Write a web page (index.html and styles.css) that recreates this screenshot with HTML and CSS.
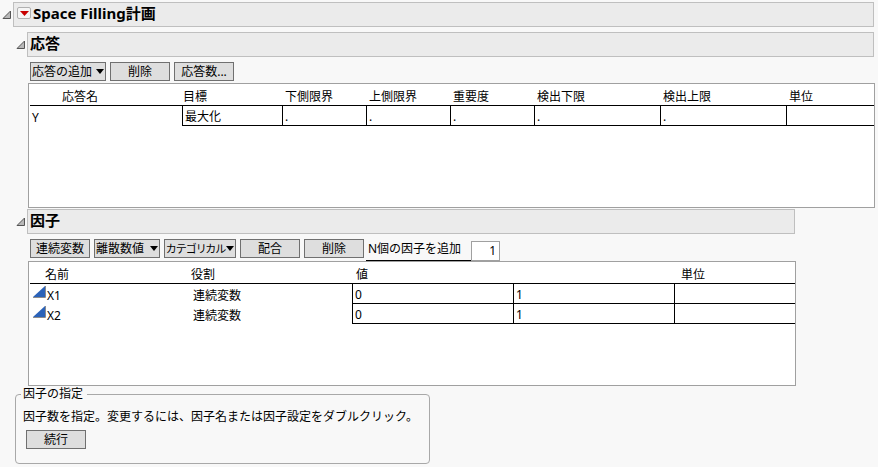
FILE: index.html
```html
<!DOCTYPE html>
<html lang="ja">
  <head>
    <meta charset="UTF-8" />
    <meta name="viewport" content="width=device-width, initial-scale=1" />
    <title>Space Filling計画</title>
    <link rel="stylesheet" href="styles.css">
  </head>
  <body>
    <main class="report">
      <div class="outline">
        <button class="disclosure" aria-label="Space Filling計画を閉じる">
          <svg width="10" height="10" viewBox="0 0 10 10"><path d="M1 8.5H8.5V1Z" fill="#b8b8b8" stroke="#555" /></svg>
        </button>
        <div class="title-bar">
          <button class="red-menu" aria-label="メニュー">
            <svg width="9" height="5" viewBox="0 0 9 5"><path d="M0 0H9L4.5 5Z" fill="#c80000" /></svg>
          </button>
          <h1>Space Filling計画</h1>
        </div>
      </div>

      <section class="section">
        <div class="outline">
          <button class="disclosure" aria-label="応答を閉じる">
            <svg width="10" height="10" viewBox="0 0 10 10"><path d="M1 8.5H8.5V1Z" fill="#b8b8b8" stroke="#555" /></svg>
          </button>
          <div class="title-bar"><h2>応答</h2></div>
        </div>
        <div class="toolbar">
          <button class="btn menu wide">応答の追加<span class="arrow"></span></button>
          <button class="btn">削除</button>
          <button class="btn">応答数...</button>
        </div>
        <div class="list">
          <table class="responses">
            <colgroup>
              <col class="col-name" />
              <col class="col-goal" />
              <col class="col-num" />
              <col class="col-num" />
              <col class="col-num" />
              <col class="col-detect" />
              <col class="col-detect" />
              <col />
            </colgroup>
            <thead>
              <tr>
                <th class="indent">応答名</th>
                <th class="goal-head">目標</th>
                <th>下側限界</th>
                <th>上側限界</th>
                <th>重要度</th>
                <th>検出下限</th>
                <th>検出上限</th>
                <th>単位</th>
              </tr>
            </thead>
            <tbody>
              <tr>
                <td>Y</td>
                <td class="cell">最大化</td>
                <td class="cell">.</td>
                <td class="cell">.</td>
                <td class="cell">.</td>
                <td class="cell">.</td>
                <td class="cell">.</td>
                <td class="cell"></td>
              </tr>
            </tbody>
          </table>
        </div>
      </section>

      <section class="section factors-section">
        <div class="outline">
          <button class="disclosure" aria-label="因子を閉じる">
            <svg width="10" height="10" viewBox="0 0 10 10"><path d="M1 8.5H8.5V1Z" fill="#b8b8b8" stroke="#555" /></svg>
          </button>
          <div class="title-bar"><h2>因子</h2></div>
        </div>
        <div class="toolbar">
          <button class="btn">連続変数</button>
          <button class="btn menu">離散数値<span class="arrow"></span></button>
          <button class="btn menu kana">カテゴリカル<span class="arrow"></span></button>
          <button class="btn">配合</button>
          <button class="btn">削除</button>
          <div class="add-factors">
            <label for="factorCount">N個の因子を追加</label>
            <input type="text" id="factorCount" value="1" />
          </div>
        </div>
        <div class="list">
          <table class="factors">
            <colgroup>
              <col class="col-factor" />
              <col class="col-value" />
              <col class="col-value" />
              <col class="col-value" />
              <col />
            </colgroup>
            <thead>
              <tr>
                <th class="factor-head">名前</th>
                <th>役割</th>
                <th colspan="2" class="value-head">値</th>
                <th class="unit-head">単位</th>
              </tr>
            </thead>
            <tbody>
              <tr>
                <td class="factor">
                  <svg width="13" height="12" viewBox="0 0 13 12"><path d="M0 11L12 0V11Z" fill="#2b62b8" /><path d="M0 11.5H12.5V0" fill="none" stroke="#8c8c8c" /></svg>X1
                </td>
                <td>連続変数</td>
                <td class="cell">0</td>
                <td class="cell">1</td>
                <td class="cell"></td>
              </tr>
              <tr>
                <td class="factor">
                  <svg width="13" height="12" viewBox="0 0 13 12"><path d="M0 11L12 0V11Z" fill="#2b62b8" /><path d="M0 11.5H12.5V0" fill="none" stroke="#8c8c8c" /></svg>X2
                </td>
                <td>連続変数</td>
                <td class="cell">0</td>
                <td class="cell">1</td>
                <td class="cell"></td>
              </tr>
            </tbody>
          </table>
        </div>
      </section>

      <fieldset class="specify">
        <legend>因子の指定</legend>
        <p>因子数を指定。変更するには、因子名または因子設定をダブルクリック。</p>
        <button class="btn">続行</button>
      </fieldset>
    </main>
  </body>
</html>
```
FILE: styles.css
```css
* {
  box-sizing: border-box;
}
body {
  margin: 0;
  background-color: #f8f8f8;
  color: #000;
  font-family: "Noto Sans", "Noto Sans CJK JP", sans-serif;
  font-size: 12px;
  line-height: 16px;
}
button,
input {
  font: inherit;
  color: inherit;
}
h1,
h2 {
  margin: 0;
  font-size: 15px;
  line-height: 20px;
  font-weight: bold;
}
.report {
  padding: 2px 3px 0 2px;
}
.section {
  padding-left: 14px;
  margin-top: 5px;
}
.factors-section {
  max-width: 794px;
  margin-top: 1px;
}

/* outline headings */
.outline {
  display: flex;
  align-items: center;
  padding-right: 1px;
}
.disclosure {
  display: flex;
  width: 11px;
  padding: 0;
  border: none;
  background: none;
}
.title-bar {
  flex: 1;
  display: flex;
  align-items: center;
  height: 25px;
  padding: 0 3px 3px;
  gap: 2px;
  background-color: #ebebeb;
  border: 1px solid #bfbfbf;
}
.section .title-bar {
  padding: 0 2px 4px;
}
.red-menu {
  display: flex;
  align-items: center;
  justify-content: center;
  width: 14px;
  height: 12px;
  padding: 0;
  border: 1px solid #b0b0b0;
  border-radius: 2px;
  background-color: #f5f5f5;
}

/* buttons */
.toolbar {
  display: flex;
  gap: 4px;
  height: 26px;
  padding: 5px 0 0 14px;
}
.factors-section .toolbar {
  height: 27px;
}
.btn {
  width: 60px;
  height: 19px;
  padding: 0;
  border: 1px solid #707070;
  background-color: #dedede;
  line-height: 17px;
  white-space: nowrap;
}
.menu {
  display: flex;
  align-items: center;
  justify-content: space-between;
  width: 66px;
  padding: 0 1px;
}
.wide {
  width: 76px;
}
.kana {
  width: 72px;
  font-size: 11px;
  font-feature-settings: "palt";
}
.arrow {
  border: 4px solid transparent;
  border-top: 5px solid #000;
  border-bottom: none;
}
.add-factors {
  display: flex;
  margin-left: -2px;
}
.add-factors label {
  width: 105px;
  height: 22px;
  padding: 2px 0 0 2px;
  border-bottom: 1px solid #000;
}
.add-factors input {
  width: 29px;
  height: 20px;
  margin-top: 2px;
  padding: 0 3px 2px;
  border: 1px solid #a0a0a0;
  background-color: #fff;
  text-align: right;
}

/* tables */
.list {
  height: 125px;
  margin-left: 12px;
  padding-left: 1px;
  background-color: #fff;
  border: 1px solid #a0a0a0;
}
table {
  width: 100%;
  table-layout: fixed;
  border-collapse: separate;
  border-spacing: 0;
}
th {
  height: 22px;
  padding: 5px 0 0;
  border-bottom: 1px solid #000;
  font-weight: normal;
  text-align: left;
}
td {
  height: 20px;
  padding: 4px 0 0 2px;
}
.cell {
  padding: 3px 0 0 2px;
  border-left: 1px solid #000;
  border-bottom: 1px solid #000;
}
.responses th {
  padding-left: 3px;
}
.responses .indent {
  padding-left: 32px;
}
.responses .goal-head {
  padding-left: 1px;
}
.factors .factor-head {
  padding-left: 15px;
}
.factors .value-head {
  padding-left: 4px;
}
.factors .unit-head {
  padding-left: 7px;
}
.col-name {
  width: 152px;
}
.col-goal {
  width: 100px;
}
.col-num {
  width: 84px;
}
.col-detect {
  width: 126px;
}
.col-factor,
.col-value {
  width: 161px;
}
.factor svg {
  margin: 0 1px;
  vertical-align: 2px;
}
.factor {
  padding-top: 2px;
}

/* bottom group */
.specify {
  width: 415px;
  max-width: 100%;
  margin: 0 0 0 13px;
  padding: 7px 7px 14px;
  border: 1px solid #a8a8a8;
  border-radius: 4px;
}
.specify legend {
  padding: 0 4px 0 2px;
  margin-left: -2px;
}
.specify p {
  margin: 0 0 5px;
}
.specify .btn {
  margin-left: 3px;
}
```
